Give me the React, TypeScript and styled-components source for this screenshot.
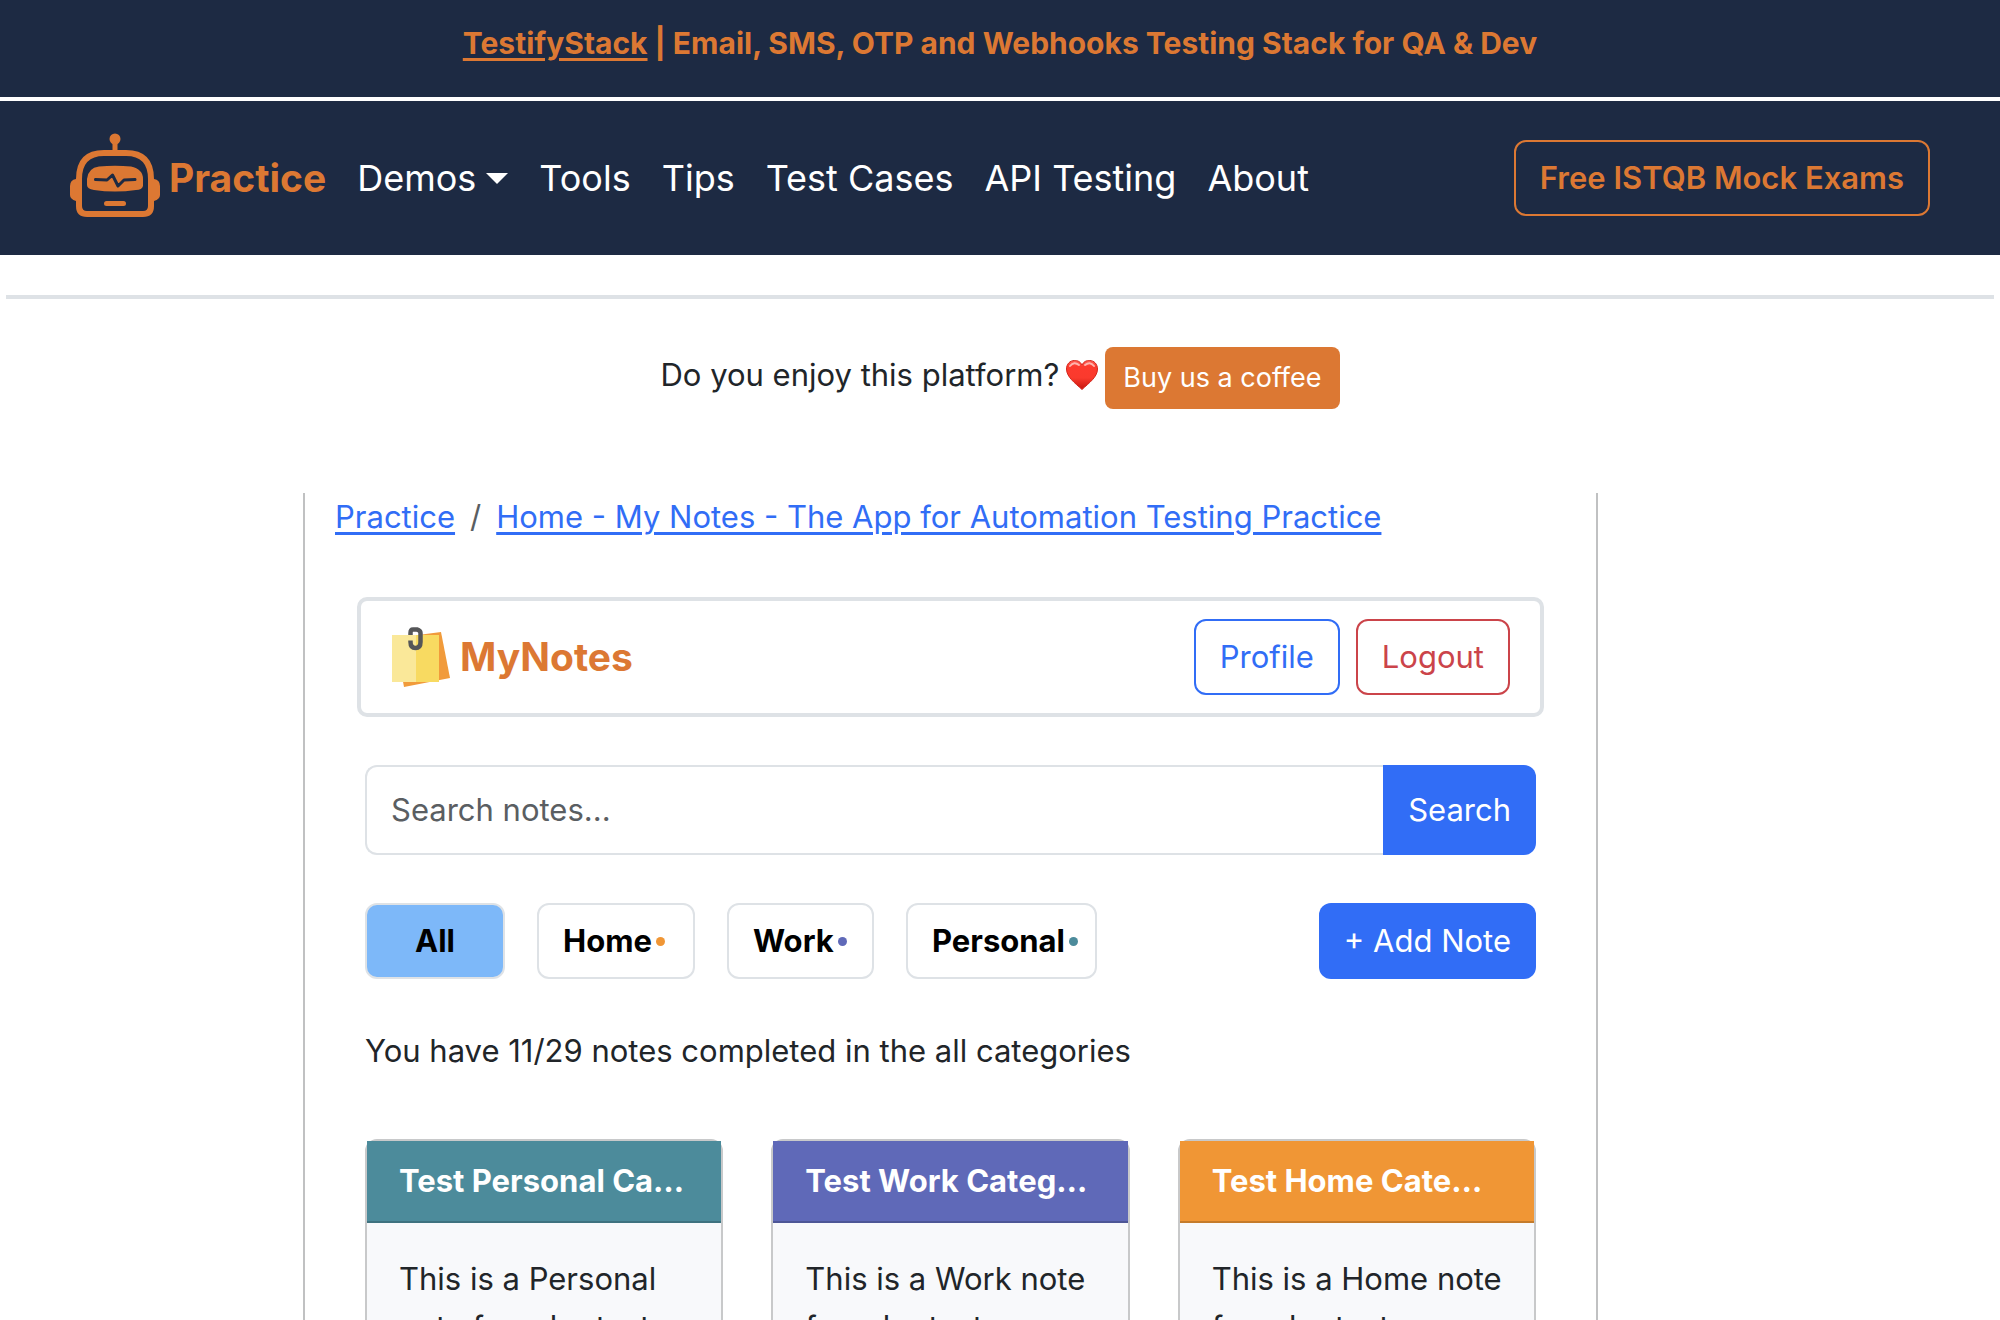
import React from "react";
import styled, { createGlobalStyle } from "styled-components";

const color = {
  navy: "#1d2a43",
  orange: "#dc7833",
  blue: "#316df6",
  red: "#cb444a",
  line: "#dee2e6",
  frame: "#c0c1c2",
  text: "#212529",
  home: "#f09635",
  work: "#5f69b8",
  personal: "#4c8b9b",
};

const GlobalStyle = createGlobalStyle`
  *, *::before, *::after { box-sizing: border-box; }
  html, body { margin: 0; background: #fff; }
  body {
    color: ${color.text};
    font-family: Inter, "Liberation Sans", sans-serif;
    font-size: 31px;
    line-height: 48px;
    overflow: hidden;
  }
  button, input { font: inherit; }
`;

const Page = styled.div`
  height: 100vh;
  overflow: hidden;
`;

const Banner = styled.div`
  padding: 19px 24px 30px;
  background: ${color.navy};
  color: ${color.orange};
  font-size: 30px;
  font-weight: 700;
  text-align: center;
`;

const BannerLink = styled.a`
  color: inherit;
  text-decoration-thickness: 3px;
  text-underline-offset: 4px;
`;

const Navbar = styled.nav`
  display: flex;
  align-items: center;
  justify-content: space-between;
  margin-top: 4px;
  padding: 31px 70px;
  height: 154px;
  background: ${color.navy};
`;

const NavGroup = styled.div`
  display: flex;
  align-items: center;
  gap: 31px;
`;

const Brand = styled.a`
  display: flex;
  align-items: center;
  gap: 9px;
  color: ${color.orange};
  font-size: 39px;
  font-weight: 700;
  text-decoration: none;
`;

const NavLink = styled.a`
  display: flex;
  align-items: center;
  gap: 10px;
  color: #fff;
  font-size: 36px;
  text-decoration: none;
`;

const Caret = styled.span`
  border-top: 11px solid currentColor;
  border-left: 11px solid transparent;
  border-right: 11px solid transparent;
`;

const OutlineButton = styled.button<{ $tone: string; $weight?: number }>`
  height: 76px;
  padding: 0 24px;
  border: 2px solid ${(p) => p.$tone};
  border-radius: 12px;
  background: transparent;
  color: ${(p) => p.$tone};
  font-weight: ${(p) => p.$weight ?? 400};
  white-space: nowrap;
`;

const Divider = styled.hr`
  height: 4px;
  margin: 40px 6px 0;
  border: 0;
  background: ${color.line};
`;

const Support = styled.section`
  display: flex;
  align-items: center;
  justify-content: center;
  gap: 7px;
  padding: 48px 24px 84px;
`;

const SupportText = styled.span`
  display: flex;
  align-items: center;
  gap: 7px;
  padding-bottom: 6px;
`;

const CoffeeButton = styled.button`
  height: 62px;
  padding: 0 18px;
  border: 0;
  border-radius: 8px;
  background: ${color.orange};
  color: #fff;
  font-size: 27px;
`;

const Columns = styled.div`
  display: grid;
  grid-template-columns: 303fr 1295fr 402fr;
`;

const Content = styled.main`
  grid-column: 2;
  padding: 0 30px;
  border: 0 solid ${color.frame};
  border-width: 0 2px;
`;

const Breadcrumb = styled.nav`
  display: flex;
  gap: 15px;
  color: #5a5e62;
`;

const Crumb = styled.a`
  color: ${color.blue};
  text-decoration-thickness: 3px;
  text-underline-offset: 4px;
`;

const AppHeader = styled.header`
  display: flex;
  align-items: center;
  justify-content: space-between;
  height: 120px;
  margin: 56px 22px 48px;
  padding: 0 30px;
  border: 4px solid ${color.line};
  border-radius: 10px;
`;

const ButtonRow = styled.div`
  display: flex;
  gap: 16px;
`;

const Workspace = styled.div`
  padding: 0 30px;
`;

const SearchForm = styled.form`
  display: flex;
  height: 90px;
`;

const SearchInput = styled.input`
  flex: 1;
  min-width: 0;
  padding: 0 24px;
  border: 2px solid ${color.line};
  border-right: 0;
  border-radius: 12px 0 0 12px;
  color: ${color.text};
  &::placeholder { color: #5a5e62; opacity: 1; }
`;

const PrimaryButton = styled.button<{ $joined?: boolean }>`
  padding: 0 25px;
  border: 0;
  border-radius: ${(p) => (p.$joined ? "0 12px 12px 0" : "12px")};
  background: ${color.blue};
  color: #fff;
  white-space: nowrap;
`;

const Toolbar = styled.div`
  display: flex;
  justify-content: space-between;
  height: 76px;
  margin: 48px 0;
`;

const Filters = styled.div`
  display: flex;
  gap: 32px;
`;

const FilterButton = styled.button<{ $active?: boolean; $width: number }>`
  display: flex;
  align-items: center;
  justify-content: ${(p) => (p.$active ? "center" : "flex-start")};
  gap: 4px;
  width: ${(p) => p.$width}px;
  padding: 0 24px;
  border: 2px solid ${color.line};
  border-radius: 12px;
  background: ${(p) => (p.$active ? "#7db8f9" : "#fff")};
  color: #000;
  font-weight: 700;
`;

const Dot = styled.span<{ $tone: string }>`
  flex: none;
  width: 9px;
  height: 9px;
  border-radius: 50%;
  background: ${(p) => p.$tone};
`;

const Summary = styled.p`
  margin: 0 0 64px;
`;

const Cards = styled.div`
  display: grid;
  grid-template-columns: repeat(3, minmax(0, 1fr));
  gap: 48px;
`;

const Card = styled.article`
  border: 2px solid #c8c9ca;
  border-radius: 12px;
  background: #f8f9fb;
`;

const CardTitle = styled.h2<{ $tone: string }>`
  margin: 0;
  padding: 16px 36px 16px 32px;
  border-bottom: 2px solid rgba(0, 0, 0, 0.18);
  background: ${(p) => p.$tone};
  color: #fff;
  font-size: 31px;
  font-weight: 700;
  overflow: hidden;
  text-overflow: ellipsis;
  white-space: nowrap;
`;

const CardText = styled.p`
  margin: 0;
  padding: 32px;
`;

const RobotLogo = () => (
  <svg width="90" height="90" viewBox="0 0 90 90" fill="none" stroke={color.orange} aria-hidden="true">
    <path d="M45 10V20" strokeWidth="5" />
    <circle cx="45" cy="6" r="5.5" fill={color.orange} stroke="none" />
    <path
      d="M34 20H56Q81 20 81 46V73Q81 81 73 81H17Q9 81 9 73V46Q9 20 34 20Z"
      strokeWidth="6"
    />
    <path d="M6 46Q0 47 0 53V62Q0 66 6 68ZM84 46Q90 47 90 53V62Q90 66 84 68Z" fill={color.orange} stroke="none" />
    <path
      d="M29 33.500Q45 32 61 33.500Q73 36 73 46V53Q72 57 66 57Q45 60 24 57Q17 56 17 52V46Q18 35 29 33.500Z"
      fill={color.orange}
      stroke="none"
    />
    <path
      d="M25.500 46.500L37 47L42.500 42L48 53L54 47L65 46.500"
      stroke={color.navy}
      strokeWidth="3"
      strokeLinecap="round"
      strokeLinejoin="round"
    />
    <path d="M36.500 70.500H53.500" strokeWidth="5" strokeLinecap="round" />
  </svg>
);

const NotesLogo = () => (
  <svg width="60" height="60" viewBox="-1 0 60 60" aria-hidden="true">
    <path d="M3 11L49 5L58 51L12 60Z" fill="#f19b3b" />
    <path d="M0 8H24V55H0Z" fill="#fae899" />
    <path d="M24 8H47V55H24Z" fill="#f8da61" />
    <path
      d="M18.500 8V6Q18.500 2.500 21 2.500H25Q28.500 3.500 28.500 6V15Q28.500 21 23.500 21Q18.500 21 18.500 15V13.500"
      fill="none"
      stroke="#555658"
      strokeWidth="4.500"
    />
  </svg>
);

const Heart = () => (
  <svg width="32" height="30" viewBox="0 0 32 30" role="img" aria-label="love">
    <defs>
      <linearGradient id="heart" x1="0" y1="0" x2="0" y2="1">
        <stop offset="0" stopColor="#ff6258" />
        <stop offset="0.2" stopColor="#fd3a2e" />
        <stop offset="0.6" stopColor="#fa3a2d" />
        <stop offset="1" stopColor="#c4140c" />
      </linearGradient>
    </defs>
    <path
      d="M16 5C18 1 21 0.500 23.500 0.500C28 0.500 31.500 4 31.500 9C31.500 17 23 23 16 29.500C9 23 0.500 17 0.500 9C0.500 4 4 0.500 8.500 0.500C11 0.500 14 1 16 5Z"
      fill="url(#heart)"
      stroke="#d3261c"
      strokeWidth="1"
    />
    <path d="M4 6Q8 1 13 5M19 5Q24 1 28 6" fill="none" stroke="#ffb5ae" strokeWidth="2" strokeLinecap="round" />
  </svg>
);

const navLinks = ["Tools", "Tips", "Test Cases", "API Testing", "About"];

const filters = [
  { label: "Home", tone: color.home, width: 158 },
  { label: "Work", tone: color.work, width: 147 },
  { label: "Personal", tone: color.personal, width: 191 },
];

const notes = [
  { title: "Test Personal Category", text: "This is a Personal note founder test", tone: color.personal },
  { title: "Test Work Category", text: "This is a Work note founder test", tone: color.work },
  { title: "Test Home Category", text: "This is a Home note founder test", tone: color.home },
];

export default function App() {
  return (
    <Page>
      <GlobalStyle />
      <Banner>
        <BannerLink href="#">TestifyStack</BannerLink> | Email, SMS, OTP and Webhooks Testing Stack for QA &amp; Dev
      </Banner>
      <Navbar>
        <NavGroup>
          <Brand href="#">
            <RobotLogo />
            Practice
          </Brand>
          <NavLink href="#">
            Demos
            <Caret />
          </NavLink>
          {navLinks.map((label) => (
            <NavLink href="#" key={label}>
              {label}
            </NavLink>
          ))}
        </NavGroup>
        <OutlineButton $tone={color.orange} $weight={600}>
          Free ISTQB Mock Exams
        </OutlineButton>
      </Navbar>
      <Divider />
      <Support>
        <SupportText>
          Do you enjoy this platform?
          <Heart />
        </SupportText>
        <CoffeeButton>Buy us a coffee</CoffeeButton>
      </Support>
      <Columns>
        <Content>
          <Breadcrumb aria-label="Breadcrumb">
            <Crumb href="#">Practice</Crumb>
            <span>/</span>
            <Crumb href="#">Home - My Notes - The App for Automation Testing Practice</Crumb>
          </Breadcrumb>
          <AppHeader>
            <Brand href="#">
              <NotesLogo />
              MyNotes
            </Brand>
            <ButtonRow>
              <OutlineButton $tone={color.blue}>Profile</OutlineButton>
              <OutlineButton $tone={color.red}>Logout</OutlineButton>
            </ButtonRow>
          </AppHeader>
          <Workspace>
            <SearchForm onSubmit={(e) => e.preventDefault()}>
              <SearchInput aria-label="Search notes" placeholder="Search notes..." />
              <PrimaryButton $joined type="submit">
                Search
              </PrimaryButton>
            </SearchForm>
            <Toolbar>
              <Filters>
                <FilterButton $active $width={140}>
                  All
                </FilterButton>
                {filters.map((f) => (
                  <FilterButton key={f.label} $width={f.width}>
                    {f.label}
                    <Dot $tone={f.tone} />
                  </FilterButton>
                ))}
              </Filters>
              <PrimaryButton>+ Add Note</PrimaryButton>
            </Toolbar>
            <Summary>You have 11/29 notes completed in the all categories</Summary>
            <Cards>
              {notes.map((n) => (
                <Card key={n.title}>
                  <CardTitle $tone={n.tone}>{n.title}</CardTitle>
                  <CardText>{n.text}</CardText>
                </Card>
              ))}
            </Cards>
          </Workspace>
        </Content>
      </Columns>
    </Page>
  );
}
